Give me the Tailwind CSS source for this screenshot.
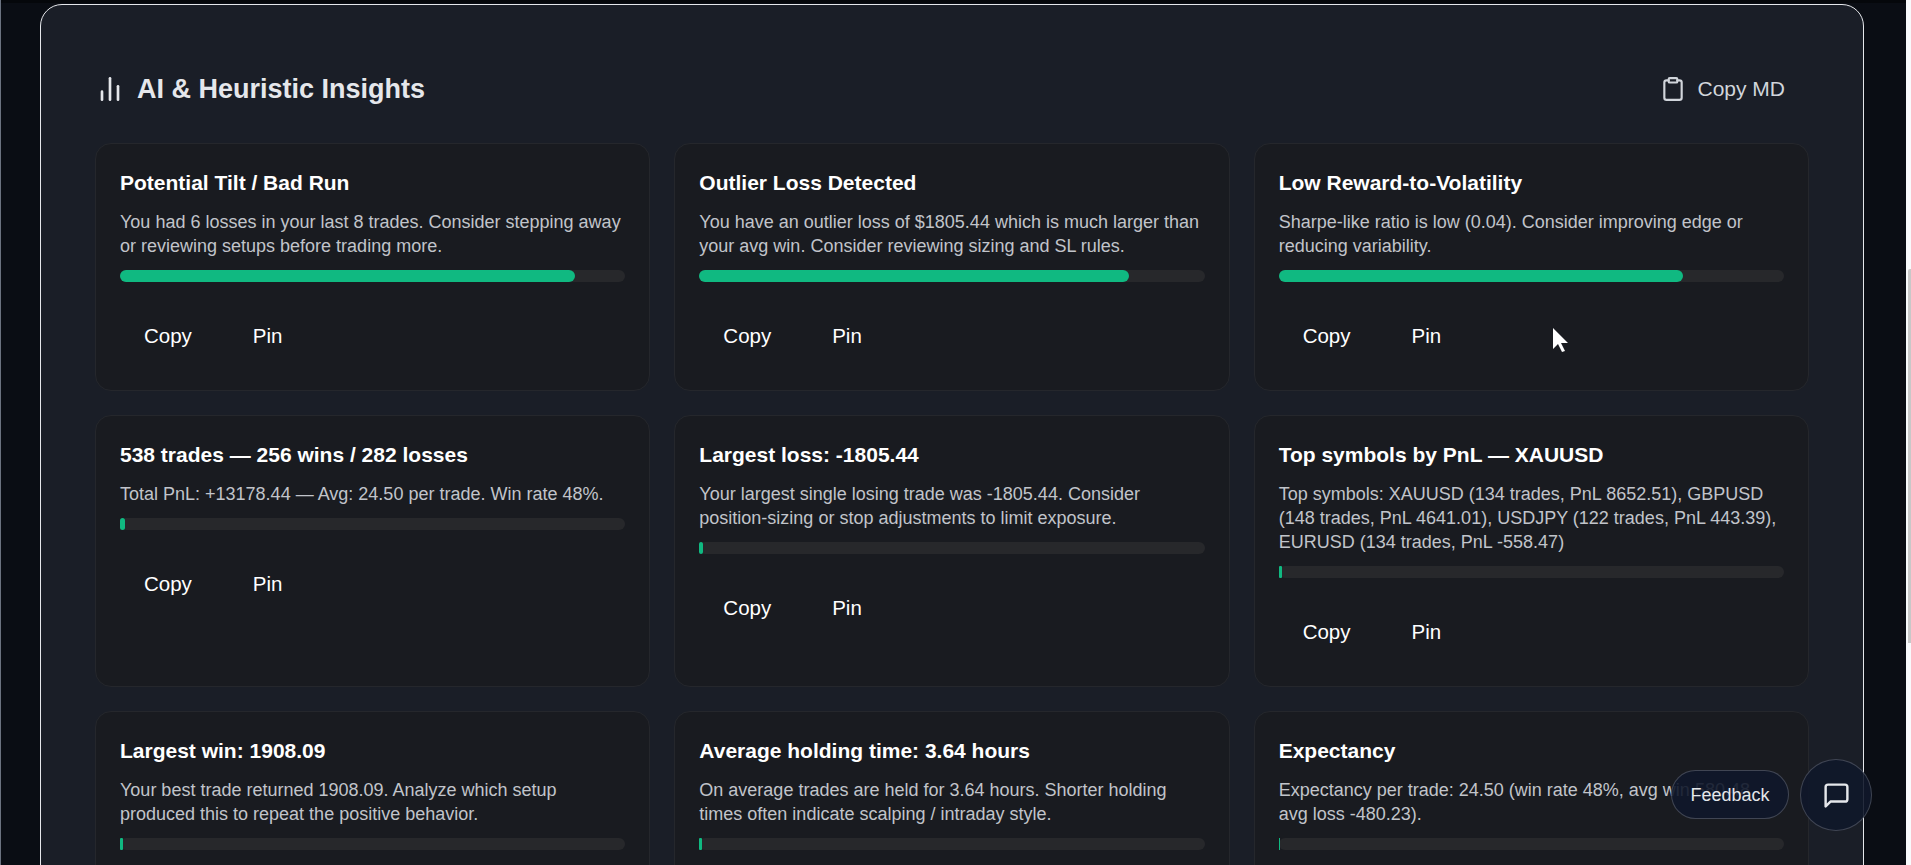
<!DOCTYPE html>
<html lang="en">
<head>
  <meta charset="UTF-8">
  <title>AI & Heuristic Insights</title>
  <script src="https://cdn.jsdelivr.net/npm/@tailwindcss/browser@4"></script>
</head>
<body class="h-screen overflow-hidden bg-[#f8fafc] font-['Liberation_Sans',Arial,sans-serif]">

  <div class="relative h-[865px] w-[1906px] overflow-hidden border-l border-[#6b7280] bg-[#0a0d14] pt-[4px] pl-[39px]">
    <div class="absolute inset-x-0 top-0 h-[3px] bg-[#05070b]"></div>

    <section class="w-[1824px] h-[1200px] rounded-t-[22px] border border-[#e5e7eb] bg-[#1a1e27] px-[54px] pt-[68px]">
      <header class="flex items-center justify-between h-[32px] mb-[38px]">
        <h2 class="flex items-center gap-[11px] -ml-[1px] text-[27px] font-bold text-[#e5e7eb]">
          <svg class="w-[32px] h-[32px]" viewBox="0 0 24 24" fill="none" stroke="#e5e7eb" stroke-width="2" stroke-linecap="round" stroke-linejoin="round"><line x1="18" y1="20" x2="18" y2="10"/><line x1="12" y1="20" x2="12" y2="4"/><line x1="6" y1="20" x2="6" y2="14"/></svg>
          AI &amp; Heuristic Insights
        </h2>
        <button class="flex items-center gap-[11px] pr-[24px] text-[21px] text-[#d1d5db]">
          <svg class="w-[26px] h-[26px]" viewBox="0 0 24 24" fill="none" stroke="#d1d5db" stroke-width="2" stroke-linecap="round" stroke-linejoin="round"><path d="M16 4h2a2 2 0 0 1 2 2v14a2 2 0 0 1-2 2H6a2 2 0 0 1-2-2V6a2 2 0 0 1 2-2h2"/><rect x="8" y="2" width="8" height="4" rx="1"/></svg>
          Copy MD
        </button>
      </header>

      <div class="grid grid-cols-3 gap-[24px]">
        <article class="rounded-[16px] border border-[#25272c] bg-[#191b20] p-[24px]">
          <h3 class="text-[21px] leading-[30px] font-bold text-white">Potential Tilt / Bad Run</h3>
          <p class="mt-[12px] text-[18px] leading-[24px] text-[#c1c4ca]">You had 6 losses in your last 8 trades. Consider stepping away or reviewing setups before trading more.</p>
          <div class="mt-[12px] h-[12px] rounded-full bg-[#27282b]"><div class="h-full w-[90%] rounded-full bg-[#10b981]"></div></div>
          <div class="mt-[24px] flex gap-[13px] text-[20.5px] leading-[28px] text-white"><button class="px-[24px] py-[16px]">Copy</button><button class="px-[24px] py-[16px]">Pin</button></div>
        </article>
        <article class="rounded-[16px] border border-[#25272c] bg-[#191b20] p-[24px]">
          <h3 class="text-[21px] leading-[30px] font-bold text-white">Outlier Loss Detected</h3>
          <p class="mt-[12px] text-[18px] leading-[24px] text-[#c1c4ca]">You have an outlier loss of $1805.44 which is much larger than your avg win. Consider reviewing sizing and SL rules.</p>
          <div class="mt-[12px] h-[12px] rounded-full bg-[#27282b]"><div class="h-full w-[85%] rounded-full bg-[#10b981]"></div></div>
          <div class="mt-[24px] flex gap-[13px] text-[20.5px] leading-[28px] text-white"><button class="px-[24px] py-[16px]">Copy</button><button class="px-[24px] py-[16px]">Pin</button></div>
        </article>
        <article class="rounded-[16px] border border-[#25272c] bg-[#191b20] p-[24px]">
          <h3 class="text-[21px] leading-[30px] font-bold text-white">Low Reward-to-Volatility</h3>
          <p class="mt-[12px] text-[18px] leading-[24px] text-[#c1c4ca]">Sharpe-like ratio is low (0.04). Consider improving edge or reducing variability.</p>
          <div class="mt-[12px] h-[12px] rounded-full bg-[#27282b]"><div class="h-full w-[80%] rounded-full bg-[#10b981]"></div></div>
          <div class="mt-[24px] flex gap-[13px] text-[20.5px] leading-[28px] text-white"><button class="px-[24px] py-[16px]">Copy</button><button class="px-[24px] py-[16px]">Pin</button></div>
        </article>

        <article class="rounded-[16px] border border-[#25272c] bg-[#191b20] p-[24px]">
          <h3 class="text-[21px] leading-[30px] font-bold text-white">538 trades — 256 wins / 282 losses</h3>
          <p class="mt-[12px] text-[18px] leading-[24px] text-[#c1c4ca]">Total PnL: +13178.44 — Avg: 24.50 per trade. Win rate 48%.</p>
          <div class="mt-[12px] h-[12px] rounded-full bg-[#27282b]"><div class="h-full w-[0.9%] rounded-full bg-[#10b981]"></div></div>
          <div class="mt-[24px] flex gap-[13px] text-[20.5px] leading-[28px] text-white"><button class="px-[24px] py-[16px]">Copy</button><button class="px-[24px] py-[16px]">Pin</button></div>
        </article>
        <article class="rounded-[16px] border border-[#25272c] bg-[#191b20] p-[24px]">
          <h3 class="text-[21px] leading-[30px] font-bold text-white">Largest loss: -1805.44</h3>
          <p class="mt-[12px] text-[18px] leading-[24px] text-[#c1c4ca]">Your largest single losing trade was -1805.44. Consider position-sizing or stop adjustments to limit exposure.</p>
          <div class="mt-[12px] h-[12px] rounded-full bg-[#27282b]"><div class="h-full w-[0.8%] rounded-full bg-[#10b981]"></div></div>
          <div class="mt-[24px] flex gap-[13px] text-[20.5px] leading-[28px] text-white"><button class="px-[24px] py-[16px]">Copy</button><button class="px-[24px] py-[16px]">Pin</button></div>
        </article>
        <article class="rounded-[16px] border border-[#25272c] bg-[#191b20] p-[24px]">
          <h3 class="text-[21px] leading-[30px] font-bold text-white">Top symbols by PnL — XAUUSD</h3>
          <p class="mt-[12px] text-[18px] leading-[24px] text-[#c1c4ca]">Top symbols: XAUUSD (134 trades, PnL 8652.51), GBPUSD (148 trades, PnL 4641.01), USDJPY (122 trades, PnL 443.39), EURUSD (134 trades, PnL -558.47)</p>
          <div class="mt-[12px] h-[12px] rounded-full bg-[#27282b]"><div class="h-full w-[0.6%] rounded-[1px] bg-[#10b981]"></div></div>
          <div class="mt-[24px] flex gap-[13px] text-[20.5px] leading-[28px] text-white"><button class="px-[24px] py-[16px]">Copy</button><button class="px-[24px] py-[16px]">Pin</button></div>
        </article>

        <article class="rounded-[16px] border border-[#25272c] bg-[#191b20] p-[24px]">
          <h3 class="text-[21px] leading-[30px] font-bold text-white">Largest win: 1908.09</h3>
          <p class="mt-[12px] text-[18px] leading-[24px] text-[#c1c4ca]">Your best trade returned 1908.09. Analyze which setup produced this to repeat the positive behavior.</p>
          <div class="mt-[12px] h-[12px] rounded-full bg-[#27282b]"><div class="h-full w-[0.55%] rounded-[1px] bg-[#10b981]"></div></div>
          <div class="mt-[24px] flex gap-[13px] text-[20.5px] leading-[28px] text-white"><button class="px-[24px] py-[16px]">Copy</button><button class="px-[24px] py-[16px]">Pin</button></div>
        </article>
        <article class="rounded-[16px] border border-[#25272c] bg-[#191b20] p-[24px]">
          <h3 class="text-[21px] leading-[30px] font-bold text-white">Average holding time: 3.64 hours</h3>
          <p class="mt-[12px] text-[18px] leading-[24px] text-[#c1c4ca]">On average trades are held for 3.64 hours. Shorter holding times often indicate scalping / intraday style.</p>
          <div class="mt-[12px] h-[12px] rounded-full bg-[#27282b]"><div class="h-full w-[0.6%] rounded-[1px] bg-[#10b981]"></div></div>
          <div class="mt-[24px] flex gap-[13px] text-[20.5px] leading-[28px] text-white"><button class="px-[24px] py-[16px]">Copy</button><button class="px-[24px] py-[16px]">Pin</button></div>
        </article>
        <article class="rounded-[16px] border border-[#25272c] bg-[#191b20] p-[24px]">
          <h3 class="text-[21px] leading-[30px] font-bold text-white">Expectancy</h3>
          <p class="mt-[12px] text-[18px] leading-[24px] text-[#c1c4ca]">Expectancy per trade: 24.50 (win rate 48%, avg win 580.48, avg loss -480.23).</p>
          <div class="mt-[12px] h-[12px] rounded-full bg-[#27282b]"><div class="h-full w-[0.2%] bg-[#10b981]"></div></div>
          <div class="mt-[24px] flex gap-[13px] text-[20.5px] leading-[28px] text-white"><button class="px-[24px] py-[16px]">Copy</button><button class="px-[24px] py-[16px]">Pin</button></div>
        </article>
      </div>
    </section>

    <!-- floating feedback buttons -->
    <button class="absolute left-[1670px] top-[770px] flex h-[49px] w-[118px] items-center justify-center rounded-full border border-white/20 bg-[#0f172a]/90 pt-[1px] text-[18px] text-[#e5e7eb]">Feedback</button>
    <button class="absolute left-[1799px] top-[759px] flex h-[72px] w-[72px] items-center justify-center rounded-full border border-white/20 bg-[#0f172a]/90">
      <svg class="w-[29px] h-[29px]" viewBox="0 0 24 24" fill="none" stroke="#e5e7eb" stroke-width="2" stroke-linecap="round" stroke-linejoin="round"><path d="M21 15a2 2 0 0 1-2 2H7l-4 4V5a2 2 0 0 1 2-2h14a2 2 0 0 1 2 2z"/></svg>
    </button>

    <!-- mouse pointer -->
    <svg class="absolute left-[1551px] top-[327px] w-[18px] h-[26px]" viewBox="0 0 18 26"><path d="M1 1v21l5-5 4 8 3-1-4-8h7z" fill="#fff"/></svg>
  </div>

  <!-- scrollbar thumb -->
  <div class="absolute right-0 top-[269px] h-[374px] w-[3px] rounded-tl-[2px] bg-[#c8c8c8]"></div>
</body>
</html>
